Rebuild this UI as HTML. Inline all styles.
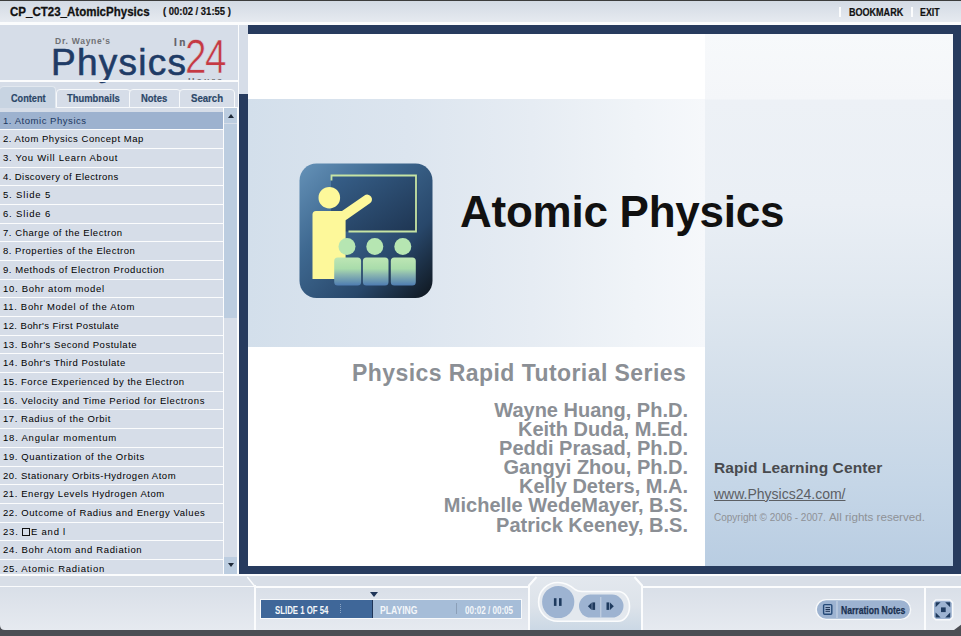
<!DOCTYPE html>
<html><head><meta charset="utf-8">
<style>
*{margin:0;padding:0;box-sizing:border-box}
html,body{width:961px;height:636px;overflow:hidden;background:#d6dde8;font-family:"Liberation Sans",sans-serif}
.a{position:absolute}
#top{left:0;top:0;width:961px;height:22px;background:linear-gradient(#d3dae4,#e6eaf0);border-top:1px solid #3c3c3c}
#topw{left:0;top:22px;width:961px;height:3px;background:#fbfcfd}
#ttl{left:10px;top:4px;font-weight:bold;font-size:13px;color:#111;-webkit-text-stroke:.3px #111;transform:scaleX(.886);transform-origin:0 0;white-space:nowrap}
#time{left:163px;top:5px;font-weight:bold;font-size:11px;color:#111;-webkit-text-stroke:.2px #111;transform:scaleX(.86);transform-origin:0 0;white-space:nowrap}
.tr{font-weight:bold;font-size:10.5px;color:#111;-webkit-text-stroke:.2px #111;transform:scaleX(.84);transform-origin:0 0;white-space:nowrap;top:6px}
.sep{top:7px;width:2px;height:10px;background:#fbfcfd}

#lp{left:0;top:25px;width:238px;height:550px;background:#d6dde8}
#vw{left:238px;top:25px;width:1px;height:550px;background:#fbfcfd}
#lstrip{left:239px;top:25px;width:9px;height:69px;background:#d6dde8}
#logow{left:0;top:80px;width:238px;height:2px;background:#fbfcfd}
.logo{white-space:nowrap}
#dr{left:55px;top:36px;font-size:8.5px;font-weight:bold;color:#6f7074;letter-spacing:.75px}
#phy{left:51px;top:42px;font-size:37px;color:#1f3b66;letter-spacing:1.25px;-webkit-text-stroke:.6px #1f3b66}
#in{left:174px;top:37px;font-size:10px;font-weight:bold;color:#606064;-webkit-text-stroke:.2px #606064;letter-spacing:2.5px}
#n24{left:185px;top:28px;font-size:49px;color:#c53a42;letter-spacing:-2px;transform:scaleX(.79);transform-origin:0 0;-webkit-text-stroke:.7px #d6dde8}
#hrs{left:188px;top:76px;font-size:9px;font-weight:bold;color:#707074;letter-spacing:2px;height:4px;overflow:hidden}
.tab{top:89px;height:19px;border:1.5px solid #f7f9fb;border-radius:4px 4px 0 0;background:#d6dde8}
.tl{top:92px;font-weight:bold;font-size:10.5px;color:#2c4768;-webkit-text-stroke:.2px #2c4768;white-space:nowrap;transform-origin:0 0}
.tab.act{top:86px;height:22px;background:#c8d4e2;border:1px solid #e2e8ef;border-left:none;border-bottom:none}
#list{left:0;top:128px;width:224px;height:447px;background:#fbfcfd}
.row{left:0;width:223px;background:#d6dde8;font-size:9.5px;color:#000;line-height:18px;padding-left:3px;white-space:nowrap;overflow:hidden}
.row.sel{background:#9db2cf;color:#1c3760}
.box{display:inline-block;width:8px;height:8px;border:1px solid #111;margin-right:1px;vertical-align:-1px}
#sbt{left:223px;top:107px;width:15px;height:468px;background:#fbfcfd}
#sbtr{left:224px;top:108px;width:13px;height:466px;background:#d6dde8}
#sb{left:224px;top:124px;width:13px;height:194px;background:#bccde0}
#sbu{left:224px;top:108px;width:13px;height:15px;background:#bccde0}
#sbd{left:224px;top:557px;width:13px;height:18px;background:#bccde0}
.tri{width:0;height:0;border-left:4px solid transparent;border-right:4px solid transparent}
#nl{left:239px;top:94px;width:9px;height:481px;background:#273b5e}
#nt{left:248px;top:25px;width:713px;height:9px;background:#273b5e}
#nr{left:953px;top:25px;width:8px;height:550px;background:#273b5e}
#nb{left:239px;top:566px;width:722px;height:9px;background:#273b5e}
#slide{left:248px;top:34px;width:705px;height:532px;background:#fff;overflow:hidden}

#band{left:248px;top:99px;width:457px;height:248px;background:linear-gradient(90deg,#d3dfeb,#dce5ef 35%,#e6ecf3 62%,#f0f4f8 85%,#f6f8fb)}
#rcol{left:705px;top:34px;width:248px;height:532px;background:linear-gradient(#f7f9fb 0px,#f4f6f9 65px,#edf1f6 66px,#eaeff5 170px,#e0e8f0 260px,#d2deea 360px,#c5d6e7 450px,#b9cde2 532px)}
#atitle{left:460px;top:187px;font-size:44px;letter-spacing:-.25px;font-weight:bold;color:#111;white-space:nowrap}
#series{left:352px;top:360px;font-size:23px;letter-spacing:.43px;font-weight:bold;color:#8b8f95;white-space:nowrap}
#names{left:400px;top:401px;width:288px;text-align:right;font-size:20px;line-height:19.1px;font-weight:bold;color:#8b8f95;white-space:nowrap}
#rlc{left:714px;top:459px;font-size:15.5px;letter-spacing:.1px;font-weight:bold;color:#484a4e;white-space:nowrap}
#url{left:714px;top:486px;font-size:14px;color:#5c5f64;white-space:nowrap;text-decoration:underline}
#copy{left:714px;top:510px;font-size:10.8px;color:#8e9196;white-space:nowrap}
#bb{left:0;top:575px;width:961px;height:61px;background:#d8dee7}
#bbw1{left:0;top:574px;width:961px;height:2px;background:#fbfcfd}
#bbw2{left:0;top:586px;width:961px;height:1px;background:#fbfcfd}
#bbp{left:0;top:587px;width:961px;height:43px;background:linear-gradient(#d9dfe8,#e6eaf0)}
#dark{left:0;top:630px;width:961px;height:6px;background:#4c4e54}
.vl{width:2px;background:#fbfcfd}
#sbox{left:260px;top:599px;width:262px;height:20px;border:1px solid #f7f9fb;background:#a6bdd8}
#sfill{left:261px;top:600px;width:112px;height:18px;background:#3f6799;border-right:1px solid #1f3558}
.wt{font-weight:bold;font-size:10.5px;color:#f4f7fa;white-space:nowrap;transform:scaleX(.82);transform-origin:0 0}
</style></head><body>
<div id="top" class="a"></div>
<div id="topw" class="a"></div>
<div id="ttl" class="a">CP_CT23_AtomicPhysics</div>
<div id="time" class="a">( 00:02 / 31:55 )</div>
<div class="a sep" style="left:839px"></div>
<div class="a tr" style="left:849px;transform:scaleX(.86)">BOOKMARK</div>
<div class="a sep" style="left:911px"></div>
<div class="a tr" style="left:920px">EXIT</div>


<div id="lp" class="a"></div>
<div id="vw" class="a"></div>
<div id="lstrip" class="a"></div>
<div id="dr" class="a logo">Dr. Wayne's</div>
<div id="phy" class="a logo">Physics</div>
<div id="in" class="a logo">In</div>
<div id="n24" class="a logo">24</div>
<div id="hrs" class="a logo">Hours</div>
<div id="logow" class="a"></div>
<div class="a tab" style="left:56px;width:75px"></div>
<div class="a tab" style="left:129px;width:52px"></div>
<div class="a tab" style="left:179px;width:56px"></div>
<div class="a tab act" style="left:0;width:56px"></div>
<div class="a tl" style="left:11px;transform:scaleX(.87)">Content</div>
<div class="a tl" style="left:67px;transform:scaleX(.895)">Thumbnails</div>
<div class="a tl" style="left:141px;transform:scaleX(.9)">Notes</div>
<div class="a tl" style="left:191px;transform:scaleX(.915)">Search</div>
<div id="list" class="a"></div>
<div class="a row sel" style="top:112px;height:17px"><span class="rt" style="letter-spacing:0.54px">1. Atomic Physics</span></div>
<div class="a row" style="top:130px;height:18px"><span class="rt" style="letter-spacing:0.52px">2. Atom Physics Concept Map</span></div>
<div class="a row" style="top:149px;height:18px"><span class="rt" style="letter-spacing:0.73px">3. You Will Learn About</span></div>
<div class="a row" style="top:168px;height:17px"><span class="rt" style="letter-spacing:0.42px">4. Discovery of Electrons</span></div>
<div class="a row" style="top:186px;height:18px"><span class="rt" style="letter-spacing:0.84px">5. Slide 5</span></div>
<div class="a row" style="top:205px;height:18px"><span class="rt" style="letter-spacing:0.84px">6. Slide 6</span></div>
<div class="a row" style="top:224px;height:17px"><span class="rt" style="letter-spacing:0.56px">7. Charge of the Electron</span></div>
<div class="a row" style="top:242px;height:18px"><span class="rt" style="letter-spacing:0.50px">8. Properties of the Electron</span></div>
<div class="a row" style="top:261px;height:18px"><span class="rt" style="letter-spacing:0.56px">9. Methods of Electron Production</span></div>
<div class="a row" style="top:280px;height:17px"><span class="rt" style="letter-spacing:0.72px">10. Bohr atom model</span></div>
<div class="a row" style="top:298px;height:18px"><span class="rt" style="letter-spacing:0.68px">11. Bohr Model of the Atom</span></div>
<div class="a row" style="top:317px;height:18px"><span class="rt" style="letter-spacing:0.40px">12. Bohr's First Postulate</span></div>
<div class="a row" style="top:336px;height:17px"><span class="rt" style="letter-spacing:0.54px">13. Bohr's Second Postulate</span></div>
<div class="a row" style="top:354px;height:18px"><span class="rt" style="letter-spacing:0.54px">14. Bohr's Third Postulate</span></div>
<div class="a row" style="top:373px;height:18px"><span class="rt" style="letter-spacing:0.54px">15. Force Experienced by the Electron</span></div>
<div class="a row" style="top:392px;height:17px"><span class="rt" style="letter-spacing:0.61px">16. Velocity and Time Period for Electrons</span></div>
<div class="a row" style="top:410px;height:18px"><span class="rt" style="letter-spacing:0.56px">17. Radius of the Orbit</span></div>
<div class="a row" style="top:429px;height:18px"><span class="rt" style="letter-spacing:0.79px">18. Angular momentum</span></div>
<div class="a row" style="top:448px;height:18px"><span class="rt" style="letter-spacing:0.61px">19. Quantization of the Orbits</span></div>
<div class="a row" style="top:467px;height:17px"><span class="rt" style="letter-spacing:0.51px">20. Stationary Orbits-Hydrogen Atom</span></div>
<div class="a row" style="top:485px;height:18px"><span class="rt" style="letter-spacing:0.57px">21. Energy Levels Hydrogen Atom</span></div>
<div class="a row" style="top:504px;height:18px"><span class="rt" style="letter-spacing:0.59px">22. Outcome of Radius and Energy Values</span></div>
<div class="a row" style="top:523px;height:17px"><span class="rt" style="letter-spacing:0.78px">23. <span class="box"></span>E and l</span></div>
<div class="a row" style="top:541px;height:18px"><span class="rt" style="letter-spacing:0.66px">24. Bohr Atom and Radiation</span></div>
<div class="a row" style="top:560px;height:18px"><span class="rt" style="letter-spacing:0.74px">25. Atomic Radiation</span></div>
<div id="sbt" class="a"></div><div id="sbtr" class="a"></div><div id="sb" class="a"></div>
<div id="sbu" class="a"><div class="a" style="left:3.5px;top:6px;width:0;height:0;border-left:3.5px solid transparent;border-right:3.5px solid transparent;border-bottom:4px solid #1e2a3a"></div></div>
<div id="sbd" class="a"><div class="a" style="left:3.5px;top:6px;width:0;height:0;border-left:3.5px solid transparent;border-right:3.5px solid transparent;border-top:4px solid #1e2a3a"></div></div>
<div id="nl" class="a"></div>
<div id="nt" class="a"></div>
<div id="nr" class="a"></div>
<div id="nb" class="a"></div>
<div id="slide" class="a"></div>

<div id="band" class="a"></div>
<div id="rcol" class="a"></div>
<svg class="a" style="left:298px;top:162px" width="138" height="138" viewBox="298 162 138 138">
 <defs>
  <linearGradient id="ig" x1="0" y1="0" x2="1" y2="1">
   <stop offset="0" stop-color="#6592b8"/><stop offset=".35" stop-color="#3e6890"/><stop offset=".7" stop-color="#28476a"/><stop offset="1" stop-color="#0e151c"/>
  </linearGradient>
  <linearGradient id="bd" x1="0" y1="0" x2="1" y2="1">
   <stop offset="0" stop-color="#37608a"/><stop offset="1" stop-color="#1e3552"/>
  </linearGradient>
  <linearGradient id="dk" x1="0" y1="0" x2="0" y2="1">
   <stop offset="0" stop-color="#bde6b4"/><stop offset=".4" stop-color="#a9dcab"/><stop offset=".6" stop-color="#8cb8b0"/><stop offset="1" stop-color="#4f7db2"/>
  </linearGradient>
 </defs>
 <rect x="299.5" y="163.5" width="133" height="134.5" rx="17" fill="url(#ig)"/>
 <rect x="331" y="175" width="86.5" height="56.5" fill="url(#bd)"/>
 <path d="M331.5 180.5 V175.5 H416 V231.5 H348.5" fill="none" stroke="#c6e4a4" stroke-width="1.8"/>
 <circle cx="329.3" cy="197.7" r="10.8" fill="#fdf89a"/>
 <path d="M312.5 279 V214.5 Q312.5 211 316 211 H342 L345.6 216 V279 Z" fill="#fdf89a"/>
 <path d="M344 215.5 L367.2 199.4" stroke="#fdf89a" stroke-width="9.6" stroke-linecap="round"/>
 <circle cx="347" cy="246.6" r="8.5" fill="#b6e6b2"/>
 <circle cx="374.8" cy="246.6" r="8.5" fill="#b6e6b2"/>
 <circle cx="402.8" cy="246.6" r="8.5" fill="#b6e6b2"/>
 <rect x="334.2" y="257.6" width="26.9" height="27.8" rx="3.5" fill="url(#dk)"/>
 <rect x="362.9" y="257.6" width="25.6" height="27.8" rx="3.5" fill="url(#dk)"/>
 <rect x="390.8" y="257.6" width="25" height="27.8" rx="3.5" fill="url(#dk)"/>
</svg>
<div id="atitle" class="a">Atomic Physics</div>
<div id="series" class="a">Physics Rapid Tutorial Series</div>
<div id="names" class="a">Wayne Huang, Ph.D.<br>Keith Duda, M.Ed.<br>Peddi Prasad, Ph.D.<br>Gangyi Zhou, Ph.D.<br>Kelly Deters, M.A.<br>Michelle WedeMayer, B.S.<br>Patrick Keeney, B.S.</div>
<div id="rlc" class="a">Rapid Learning Center</div>
<div id="url" class="a">www.Physics24.com/</div>
<div id="copy" class="a"><span style="font-size:10px">Copyright © 2006 - 2007.</span> <span style="font-size:11.6px">All rights reserved.</span></div>

<div id="bb" class="a"></div>
<div id="bbw1" class="a"></div>
<div id="bbw2" class="a"></div>
<div id="bbp" class="a"></div>
<div id="dark" class="a"></div>
<div class="a vl" style="left:254px;top:585px;height:45px"></div>
<div class="a vl" style="left:924px;top:588px;height:42px"></div>
<div id="sbox" class="a"></div>
<div id="sfill" class="a"></div>
<div class="a" style="left:370px;top:592px;width:0;height:0;border-left:4px solid transparent;border-right:4px solid transparent;border-top:5px solid #1f3558"></div>
<div class="a wt" style="left:275px;top:604px;transform:scaleX(.745)">SLIDE 1 OF 54</div>
<div class="a" style="left:340px;top:604px;width:1px;height:9px;border-left:1px dotted #8aa4c4"></div>
<div class="a wt" style="left:380px;top:604px;transform:scaleX(.82)">PLAYING</div>
<div class="a" style="left:456px;top:603px;width:1px;height:11px;background:#8b9fb8"></div>
<div class="a wt" style="left:465px;top:604px;transform:scaleX(.77)">00:02 / 00:05</div>

<svg class="a" style="left:0;top:570px" width="961" height="66" viewBox="0 570 961 66">
 <defs>
  <linearGradient id="tabg" x1="0" y1="0" x2="0" y2="1">
   <stop offset="0" stop-color="#e3e8ee"/><stop offset=".55" stop-color="#dde3ea"/><stop offset="1" stop-color="#cbd8e5"/>
  </linearGradient>
 </defs>
 <rect x="255" y="586" width="706" height="2" fill="#fbfcfd"/>
 <path d="M247.3 577 L254.5 586" stroke="#fbfcfd" stroke-width="1.4" fill="none"/>
 <path d="M528 630 V585.5 L536 576.8 H634.5 L643 585.5 V630 Z" fill="url(#tabg)"/>
 <path d="M529 630 V585.5 L536.5 577" stroke="#fbfcfd" stroke-width="2" fill="none"/>
 <path d="M642 630 V585.5 L634.5 577" stroke="#fbfcfd" stroke-width="2" fill="none"/>
 <path d="M558 582.5 C566 582.5 571 586 575 589.5 C577 591 579 591.5 582 591.5 H618 C624.5 591.5 629.5 598 629.5 606.5 C629.5 615 624.5 621.3 618 621.3 H558 C547 621.3 538.6 613 538.6 602 C538.6 591 547 582.5 558 582.5 Z" fill="#e3e8ee" stroke="#fbfcfd" stroke-width="1.6"/>
 <circle cx="558.2" cy="602" r="16.1" fill="#9db3d1"/>
 <rect x="579" y="594.6" width="44.5" height="22.9" rx="11.45" fill="#9db3d1"/>
 <rect x="553.9" y="598.2" width="2.6" height="7.7" fill="#1e3a5e"/>
 <rect x="559" y="598.2" width="2.6" height="7.7" fill="#1e3a5e"/>
 <path d="M600.8 597 V618" stroke="#c9d6e6" stroke-width="1"/>
 <path d="M591.7 602.4 L587.9 606.2 L591.7 609.9 Z" fill="#1e3a5e"/>
 <rect x="592.3" y="602.4" width="2.8" height="7.5" fill="#1e3a5e"/>
 <rect x="606.5" y="602.4" width="2.8" height="7.5" fill="#1e3a5e"/>
 <path d="M610 602.4 L613.8 606.2 L610 609.9 Z" fill="#1e3a5e"/>
 <rect x="816.2" y="599.6" width="94.4" height="19.8" rx="9.9" fill="#9db3d1" stroke="#f7f9fb" stroke-width="1.4"/>
 <rect x="823.6" y="604.6" width="8.2" height="9.6" rx="1" fill="none" stroke="#254a78" stroke-width="1.4"/>
 <path d="M825.5 607.6 H830 M825.5 609.5 H830 M825.5 611.3 H830" stroke="#1a2f50" stroke-width="1"/>
 <path d="M837 601 V618" stroke="#ccd8e8" stroke-width="1"/>
 <path d="M935.8 600 H950 L952.6 602.6 V617.2 L950 619.8 H935.8 L933.2 617.2 V602.6 Z" fill="#9db3d1" stroke="#f7f9fb" stroke-width="1.6"/>
 <path d="M935.6 602.3 h5 l-5 5 z M950.2 602.3 h-5 l5 5 z M935.6 617.4 h5 l-5 -5 z M950.2 617.4 h-5 l5 -5 z" fill="#1e3a5e"/>
 <rect x="941" y="607.4" width="4.7" height="4.7" fill="#1e3a5e"/>
 <path d="M0 630 V625 Q0 630 5 630 Z" fill="#4c4e54"/>
 <path d="M961 624.7 V630 H954 Z" fill="#4c4e54"/>
</svg>
<div class="a wt" style="left:841px;top:604px;color:#1a3050;font-size:11px;transform:scaleX(.78);-webkit-text-stroke:.25px #1a3050">Narration Notes</div>
</body></html>
